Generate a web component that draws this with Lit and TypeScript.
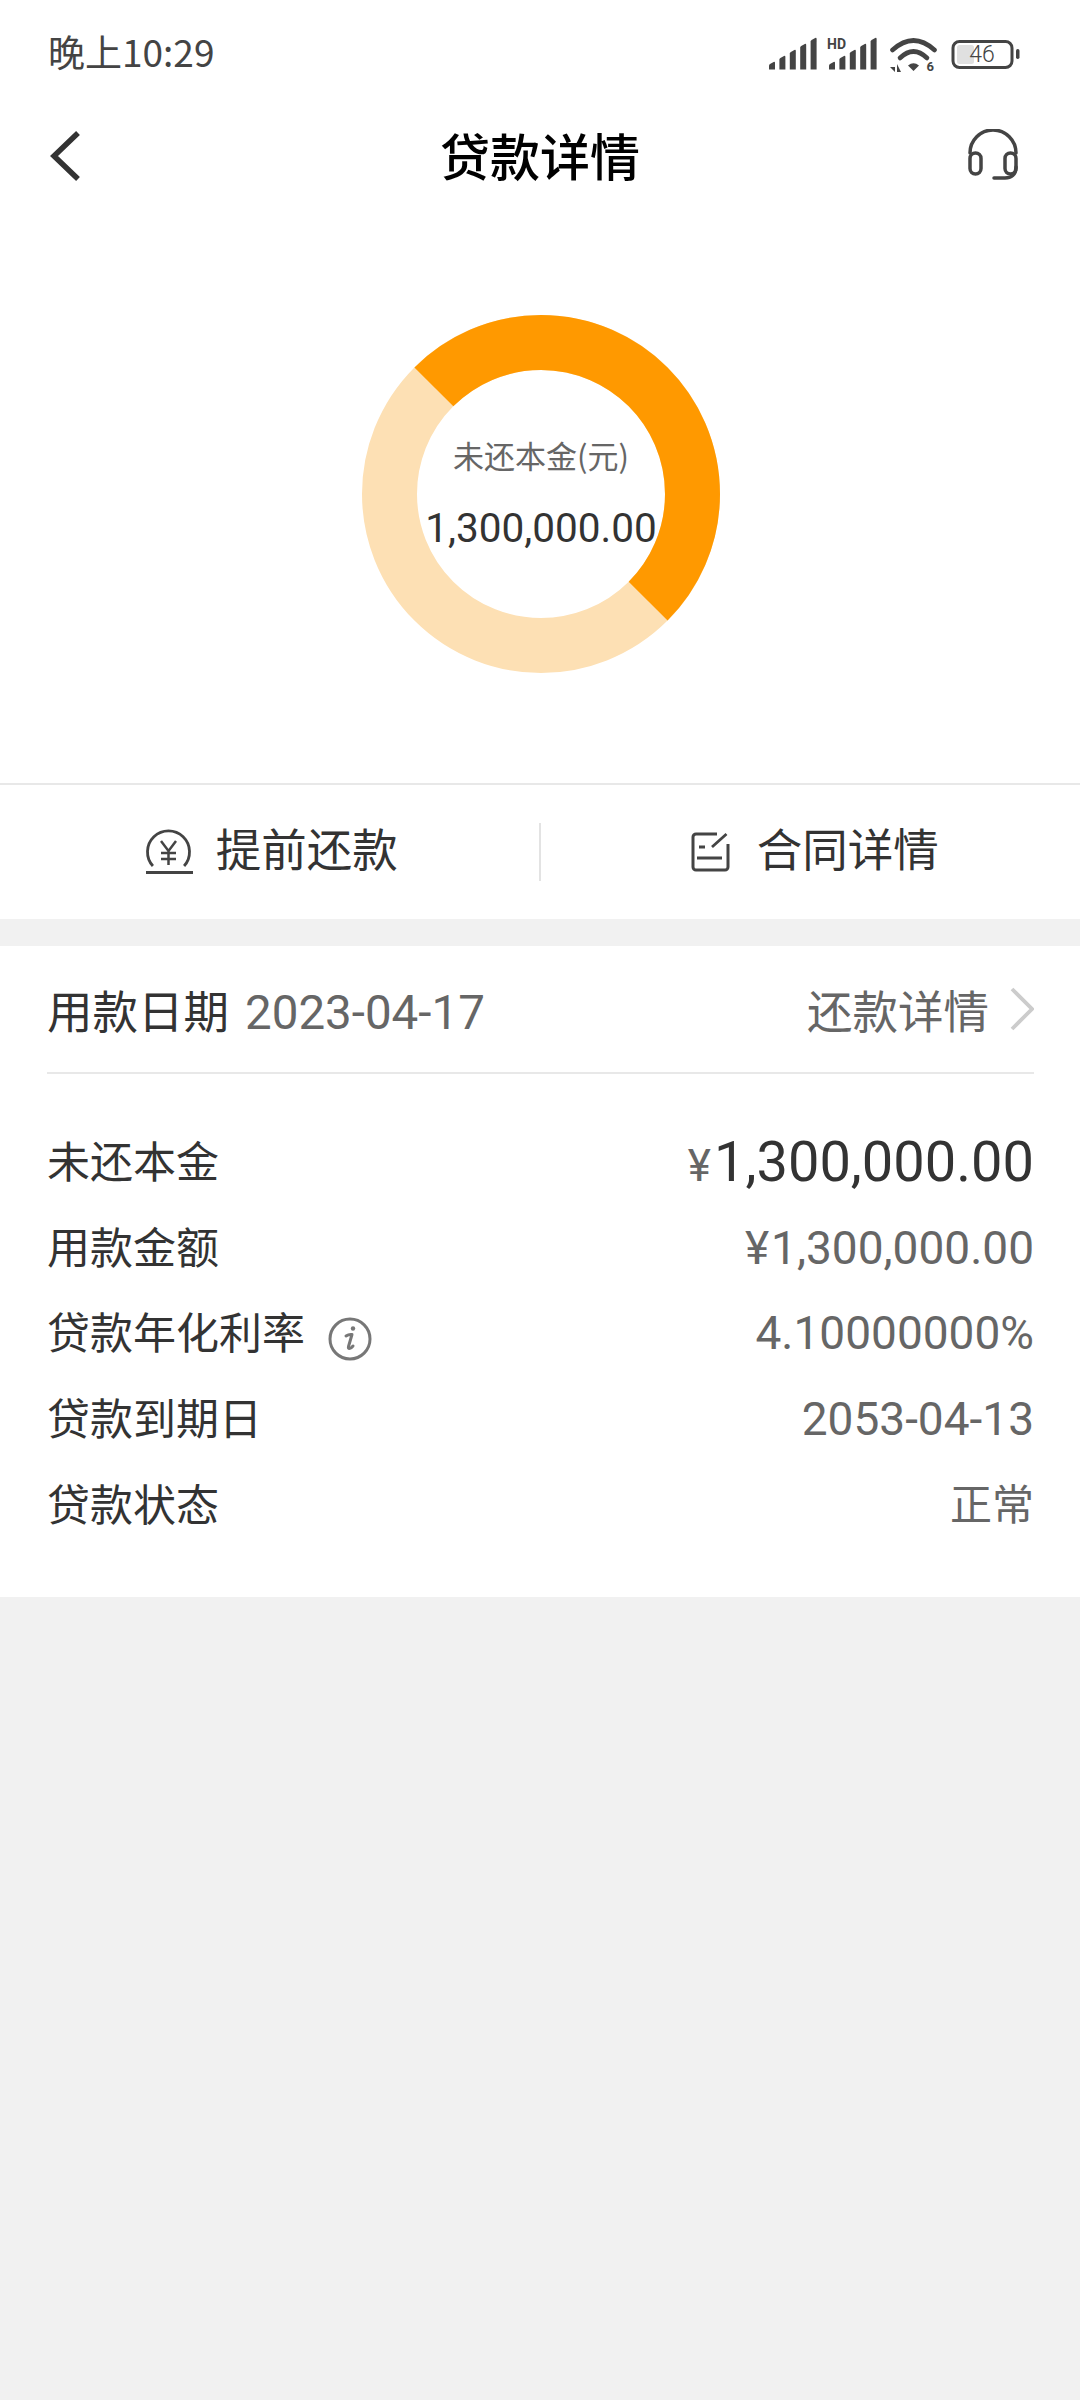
import { LitElement, html, css, svg } from "lit";
import { customElement } from "lit/decorators.js";

const polar = (a: number, r: number) => {
  const t = (a * Math.PI) / 180;
  return [179 + r * Math.sin(t), 179 - r * Math.cos(t)];
};
const R = 151.5;
const arc = (a0: number, a1: number) => {
  const [x0, y0] = polar(a0, R);
  const [x1, y1] = polar(a1, R);
  return `M${x0} ${y0}A${R} ${R} 0 0 1 ${x1} ${y1}`;
};
const bars = (ox: number) =>
  [0, 1, 2, 3, 4].map((i) => {
    const x = ox + i * 10.4;
    const h = 6 + i * 6;
    return svg`<path d="M${x} 39.5v-${h - 2}q0-1 1-1.6l3.6-2q1.4-.6 1.4 1V39.5z"/>`;
  });

@customElement("app-root")
export class AppRoot extends LitElement {
  static styles = css`
    :host { display: block; width: 1080px; height: 2400px; background: #f1f1f1; font-family: "Noto Sans CJK SC", Roboto, sans-serif; color: #333; overflow: hidden; }
    .top { background: #fff; height: 783px; display: flex; flex-direction: column; border-bottom: 2px solid #e8e8e8; box-sizing: content-box; }
    .status { height: 108px; padding: 0 59px 6px 48px; box-sizing: border-box; display: flex; align-items: center; justify-content: space-between; font-size: 37px; color: #444; }
    .status svg { display: block; margin-top: 6px; }
    .nav { height: 96px; padding: 0 50px; display: grid; grid-template-columns: 1fr auto 1fr; align-items: center; }
    .nav h1 { margin: 0; padding-bottom: 5px; font-size: 50px; font-weight: 500; color: #000; }
    .nav .help { justify-self: end; margin-right: 11px; }
    .chart { position: relative; width: 358px; height: 358px; margin: 111px 0 0 362px; }
    .chart svg { display: block; }
    .center { position: absolute; inset: 0; display: flex; flex-direction: column; align-items: center; }
    .c1 { margin-top: 118px; font-size: 31px; color: #666; line-height: 44px; }
    .c2 { margin-top: 29px; font-size: 40.5px; color: #333; font-family: Roboto, sans-serif; line-height: 44px; }
    .actions { background: #fff; height: 134px; display: flex; align-items: center; margin-bottom: 27px; }
    .action { flex: 1; display: flex; align-items: center; justify-content: center; font-size: 45.5px; color: #333; }
    .action span { padding-bottom: 10px; }
    .a1 { gap: 21px; padding-left: 6px; }
    .a2 { gap: 26px; padding-left: 9px; }
    .vdiv { width: 2px; height: 58px; background: #e3e3e3; margin-left: 2px; }
    .card { background: #fff; height: 651px; padding: 0 46px 0 47px; box-sizing: border-box; }
    .head { height: 126px; display: flex; align-items: center; justify-content: space-between; border-bottom: 2px solid #e8e8e8; box-sizing: content-box; font-size: 45.5px; }
    .head .date { margin-left: 16px; color: #666; font-family: Roboto, sans-serif; font-size: 47.5px; }
    .link { display: flex; align-items: center; gap: 21px; color: #666; }
    .rows { padding-top: 45px; }
    .row { height: 85.7px; display: flex; align-items: center; justify-content: space-between; font-size: 43px; }
    .name { padding-bottom: 6px; }
    .label { display: flex; align-items: center; gap: 23px; }
    .label svg { margin-top: 12px; }
    .val { color: #666; font-family: Roboto, sans-serif; font-size: 46px; }
    .big { color: #333; font-size: 56px; }
    .yen { font-size: 44px; color: #666; margin-right: 3px; }
    .yen2 { margin-right: 2px; }
    .state { color: #666; font-size: 42px; padding-bottom: 6px; }
  `;

  render() {
    return html`
      <div class="top">
        <div class="status">
          <span>晚上10:29</span>
          <svg width="252" height="44" viewBox="0 2 252 44" fill="#444">
            ${bars(0)}
            <text x="58" y="19" font-size="14" font-weight="700" font-family="Roboto">HD</text>
            ${bars(60)}
            <g fill="none" stroke="#444" stroke-width="4.6" stroke-linecap="round">
              <path d="M123.5 20Q144.5 1 165.5 20"/>
              <path d="M131 28Q144.500 15 158 28"/>
            </g>
            <path d="M139 35.500Q144.500 31 150 35.500L144.500 41z"/>
            <path d="M121 37h5v5zM128 42v-8l4 8z"/>
            <text x="157.500" y="41" font-size="13" font-weight="700" font-family="Roboto">6</text>
            <rect x="184" y="11.500" width="59" height="26" rx="6.500" fill="none" stroke="#444" stroke-width="3"/>
            <rect x="188" y="15" width="17" height="19" rx="2.500" fill="#e0e0e0"/>
            <rect x="247" y="19" width="3.500" height="10" rx="1.700"/>
            <text x="213" y="32" text-anchor="middle" font-size="23" font-weight="300" font-family="Roboto">46</text>
          </svg>
        </div>
        <div class="nav">
          <svg width="30" height="50" viewBox="0 0 30 50" fill="none" stroke="#333" stroke-width="5.500"><path d="M28 2 4 25l24 23"/></svg>
          <h1>贷款详情</h1>
          <svg class="help" width="52" height="54" viewBox="0 0 52 54" fill="none" stroke="#444" stroke-width="3.500" stroke-linecap="round"><path d="M3 24A23 23 0 0 1 49 24"/><rect x="3" y="24" width="11" height="21" rx="5.500"/><rect x="38" y="24" width="11" height="21" rx="5.500"/><path d="M49 38C49 46 44 49 38 49H27"/></svg>
        </div>
        <div class="chart">
          <svg width="358" height="358" viewBox="0 0 358 358" fill="none" stroke-width="55">
            <circle cx="179" cy="179" r=${R} stroke="#fde0b4"/>
            <path d=${arc(-45, 135)} stroke="#ff9900"/>
          </svg>
          <div class="center"><div class="c1">未还本金(元)</div><div class="c2">1,300,000.00</div></div>
        </div>
      </div>
      <div class="actions">
        <div class="action a1">
          <svg width="50" height="46" viewBox="0 0 50 46" fill="none" stroke="#444" stroke-width="2.800"><path d="M7.900 37A21 21 0 1 1 39.100 37"/><path d="M1 43.500H48" stroke-width="3.200"/><path d="M16 12l7.500 10L31 12M23.500 22V36M16 24H31M16 30H31" stroke-width="2.500"/></svg>
          <span>提前还款</span>
        </div>
        <div class="vdiv"></div>
        <div class="action a2">
          <svg width="40" height="40" viewBox="0 0 40 40" fill="none" stroke="#444" stroke-width="3"><path d="M26 2H5A3 3 0 0 0 2 5V35A3 3 0 0 0 5 38H34A3 3 0 0 0 37 35V12"/><path d="M6 26H31M8 15H14M35.500 2 21 15" stroke-width="2.800"/></svg>
          <span>合同详情</span>
        </div>
      </div>
      <div class="card">
        <div class="head">
          <div><span>用款日期</span><span class="date">2023-04-17</span></div>
          <div class="link"><span>还款详情</span><svg width="24" height="44" viewBox="0 0 24 44" fill="none" stroke="#ccc" stroke-width="3.800"><path d="M2 2l20 20L2 42"/></svg></div>
        </div>
        <div class="rows">
          <div class="row"><span class="name">未还本金</span><span class="val big"><span class="yen">¥</span>1,300,000.00</span></div>
          <div class="row"><span class="name">用款金额</span><span class="val"><span class="yen2">¥</span>1,300,000.00</span></div>
          <div class="row"><span class="label"><span class="name">贷款年化利率</span><svg width="44" height="44" viewBox="0 0 44 44" fill="none" stroke="#777" stroke-width="3"><circle cx="22" cy="22" r="20"/><path d="M18 19q3-2 6-1.500l-3.500 12q-.5 2 1 2t3.500-2.500" stroke-linecap="round" stroke-linejoin="round"/><circle cx="25" cy="11.500" r="2.200" fill="#777" stroke="none"/></svg></span><span class="val">4.10000000%</span></div>
          <div class="row"><span class="name">贷款到期日</span><span class="val">2053-04-13</span></div>
          <div class="row"><span class="name">贷款状态</span><span class="state">正常</span></div>
        </div>
      </div>
    `;
  }
}
